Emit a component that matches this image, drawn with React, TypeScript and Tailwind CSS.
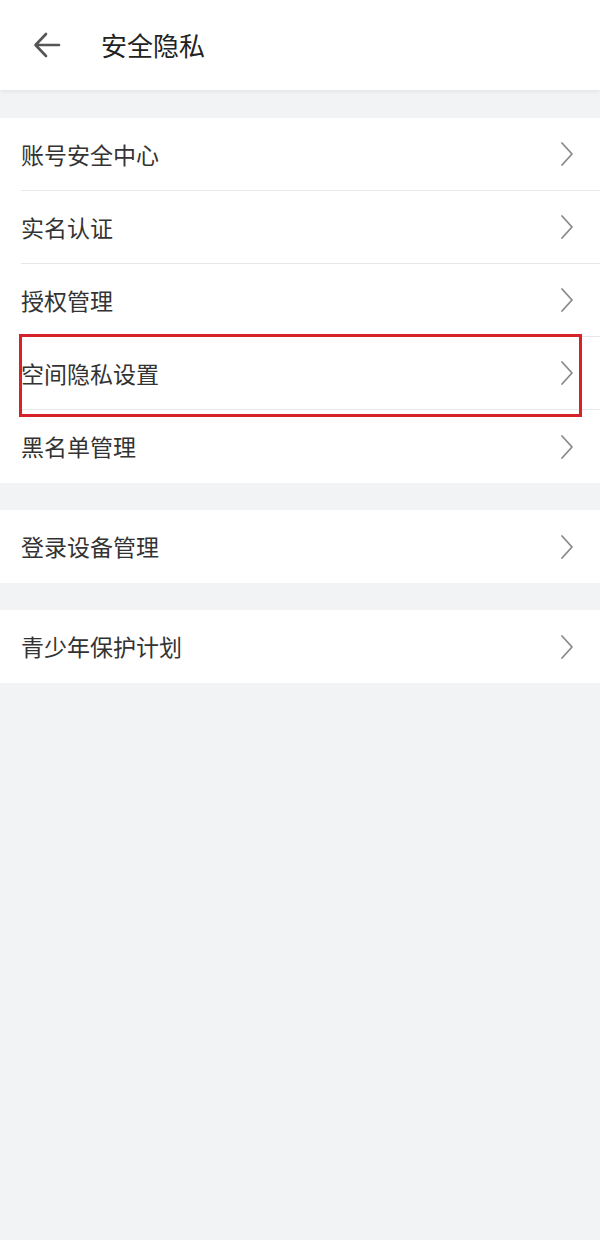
import React from "react";

const groups: string[][] = [
  ["账号安全中心", "实名认证", "授权管理", "空间隐私设置", "黑名单管理"],
  ["登录设备管理"],
  ["青少年保护计划"],
];

function Chevron() {
  return (
    <svg width="14" height="26" viewBox="0 0 14 26" fill="none" className="shrink-0">
      <path d="M2 2 L12 13 L2 24" stroke="#8a8a8a" strokeWidth="1.8" strokeLinecap="round" strokeLinejoin="round" />
    </svg>
  );
}

export default function App() {
  return (
    <div
      className="relative w-[600px] min-h-[1240px] bg-[#f2f3f5] text-[#333333]"
      style={{ fontFamily: '"Noto Sans CJK SC", "Noto Sans", sans-serif' }}
    >
      {/* Header */}
      <div className="relative z-10 flex h-[90px] items-center bg-white shadow-[0_2px_4px_rgba(0,0,0,0.06)]">
        <svg width="28" height="26" viewBox="0 0 28 26" fill="none" className="ml-[33px]">
          <path d="M26 13 H3 M13 2 L2.5 13 L13 24" stroke="#555555" strokeWidth="2.6" strokeLinecap="round" strokeLinejoin="round" />
        </svg>
        <span className="ml-[40px] text-[26px] leading-none text-[#222222]">安全隐私</span>
      </div>

      <div className="flex flex-col gap-[27px] pt-[28px]">
        {groups.map((items, gi) => (
          <div key={gi} className="bg-white">
            {items.map((label, i) => (
              <div key={label} className="pl-[21px]">
                <div
                  className={`flex h-[73px] items-center pr-[26px] ${
                    i < items.length - 1 ? "border-b border-[#e8e8e8]" : ""
                  }`}
                >
                  <span className="flex-1 text-[23px] leading-none">{label}</span>
                  <Chevron />
                </div>
              </div>
            ))}
          </div>
        ))}
      </div>

      {/* Annotation highlight */}
      <div className="pointer-events-none absolute left-[19px] top-[334px] h-[83px] w-[563px] border-[3px] border-[#d6232a]" />
    </div>
  );
}
